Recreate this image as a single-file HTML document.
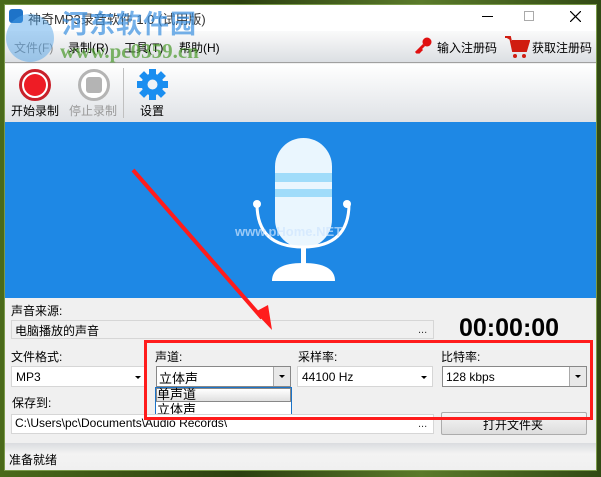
<!DOCTYPE html>
<html><head><meta charset="utf-8"><style>
*{margin:0;padding:0;box-sizing:border-box}
body{width:601px;height:477px;overflow:hidden;position:relative;background:linear-gradient(90deg,#4a6a1a,#2c4010 40%,#5a7a2a 70%,#324a14);font-family:"Liberation Sans","Noto Sans CJK SC",sans-serif;font-size:12px;color:#000}
.a{position:absolute}
.win{left:4px;top:4px;width:593px;height:467px;background:#f0f0f0;border:1px solid #7a9a4a}
.tb{border:1px solid #abadb3;background:#fff}
.cb{border:1px solid #acacac;background:#fff}
</style></head><body>
<div class="a win"></div>
<!-- title -->
<div class="a" style="left:5px;top:5px;width:591px;height:26px;background:#fff"></div>
<div class="a" style="left:9px;top:9px;width:14px;height:14px;background:#1e73c8;border-radius:3px"></div>
<div class="a" style="left:28px;top:9px;font-size:13px;color:#333">神奇MP3录音软件 1.0 (试用版)</div>
<div class="a" style="left:482px;top:16px;width:11px;height:1px;background:#000"></div>
<div class="a" style="left:524px;top:11px;width:10px;height:10px;border:1px solid #aaa"></div>
<svg class="a" style="left:570px;top:11px" width="11" height="11"><path d="M0 0L11 11M11 0L0 11" stroke="#000" stroke-width="1.2"/></svg>
<!-- menu -->
<div class="a" style="left:5px;top:31px;width:591px;height:32px;background:linear-gradient(#fafafa,#dcdfe3);border-bottom:1px solid #a0a0a0"></div>
<div class="a" style="left:14px;top:39px;font-size:12px;color:#888">文件(F)</div>
<div class="a" style="left:68px;top:39px">录制(R)</div>
<div class="a" style="left:124px;top:39px">工具(T)</div>
<div class="a" style="left:179px;top:39px">帮助(H)</div>
<svg class="a" style="left:413px;top:36px" width="20" height="20"><circle cx="14" cy="6" r="4.5" fill="#e01010"/><path d="M11 9L3 17M5 15l2 2M7 13l2 2" stroke="#e01010" stroke-width="3"/></svg>
<div class="a" style="left:437px;top:39px">输入注册码</div>
<svg class="a" style="left:504px;top:34px" width="26" height="26"><path d="M1 3h5l3 14h13l3-10H8" fill="#d01c10" stroke="#d01c10" stroke-width="2"/><circle cx="11" cy="22" r="2" fill="#d01c10"/><circle cx="20" cy="22" r="2" fill="#d01c10"/></svg>
<div class="a" style="left:532px;top:39px">获取注册码</div>
<!-- watermark -->
<div class="a" style="left:6px;top:14px;width:48px;height:48px;border-radius:50%;background:#4aa0e8;opacity:.45"></div>
<div class="a" style="left:62px;top:8px;font-size:26px;line-height:32px;font-weight:bold;color:#3a90e0;opacity:.7;letter-spacing:1px">河东软件园</div>
<div class="a" style="left:60px;top:40px;font-size:21px;line-height:22px;font-weight:bold;color:#4a9a2a;opacity:.7;font-family:'Liberation Serif',serif">www.pc0359.cn</div>
<!-- toolbar -->
<div class="a" style="left:5px;top:64px;width:591px;height:58px;background:linear-gradient(#fff,#dfe2e6)"></div>
<div class="a" style="left:19px;top:69px;width:32px;height:32px;border-radius:50%;border:3px solid #c8202a;background:#fff"></div>
<div class="a" style="left:24px;top:74px;width:22px;height:22px;border-radius:50%;background:#ee1c25"></div>
<div class="a" style="left:78px;top:69px;width:32px;height:32px;border-radius:50%;border:3px solid #b4b4b4;background:#fff"></div>
<div class="a" style="left:86px;top:77px;width:16px;height:16px;border-radius:3px;background:#b4b4b4"></div>
<div class="a" style="left:123px;top:68px;width:1px;height:50px;background:#c0c0c0"></div>
<svg class="a" style="left:136px;top:68px" width="33" height="33" viewBox="0 0 33 33"><g fill="#1a8ef0"><circle cx="16.5" cy="16.5" r="11"/><g id="t"><rect x="13" y="1" width="7" height="8"/><rect x="13" y="24" width="7" height="8"/></g><use href="#t" transform="rotate(45 16.5 16.5)"/><use href="#t" transform="rotate(90 16.5 16.5)"/><use href="#t" transform="rotate(135 16.5 16.5)"/></g><circle cx="16.5" cy="16.5" r="5" fill="#eef2f6"/></svg>
<div class="a" style="left:11px;top:102px;font-size:12px">开始录制</div>
<div class="a" style="left:69px;top:102px;font-size:12px;color:#999">停止录制</div>
<div class="a" style="left:140px;top:102px;font-size:12px">设置</div>
<!-- blue panel -->
<div class="a" style="left:5px;top:122px;width:591px;height:176px;background:#1e88e5"></div>
<svg class="a" style="left:250px;top:135px" width="110" height="150">
<rect x="25" y="3" width="57" height="110" rx="28.5" fill="#eaf6fe"/>
<rect x="25" y="38" width="57" height="9" fill="#a0dcfa"/>
<rect x="25" y="54" width="57" height="8" fill="#a0dcfa"/>
<path d="M7 69 Q7 112 53 112 Q99 112 99 69" fill="none" stroke="#fff" stroke-width="3"/>
<circle cx="7" cy="69" r="4" fill="#fff"/><circle cx="97" cy="69" r="4" fill="#fff"/>
<rect x="51" y="112" width="5" height="20" fill="#fff"/>
<path d="M22 146 Q22 128 53 128 Q85 128 85 146Z" fill="#fff"/>
</svg>
<div class="a" style="left:235px;top:224px;font-size:13px;font-weight:bold;color:#cfe6ff;opacity:.7">www.pHome.NET</div>
<!-- labels -->
<div class="a" style="left:11px;top:302px">声音来源:</div>
<div class="a tb" style="left:11px;top:320px;width:423px;height:19px;background:#f0f0f0;border-color:#d6d6d6"></div>
<div class="a" style="left:15px;top:322px">电脑播放的声音</div>
<div class="a" style="left:418px;top:324px;font-size:11px;color:#333">...</div>
<div class="a" style="left:459px;top:314px;font-size:25px;font-weight:bold">00:00:00</div>
<div class="a" style="left:11px;top:348px">文件格式:</div>
<div class="a cb" style="left:11px;top:366px;width:136px;height:21px;border-color:#d6d6d6"></div>
<div class="a" style="left:16px;top:370px">MP3</div>
<div class="a" style="left:135px;top:376px;width:0;height:0;border:3px solid transparent;border-top:3px solid #000"></div>
<div class="a" style="left:155px;top:348px">声道:</div>
<div class="a cb" style="left:156px;top:366px;width:135px;height:21px;border-color:#888"></div>
<div class="a" style="left:273px;top:367px;width:17px;height:19px;background:#e8e8e8;border-left:1px solid #aaa"></div>
<div class="a" style="left:279px;top:375px;width:0;height:0;border:3px solid transparent;border-top:3px solid #000"></div>
<div class="a" style="left:159px;top:368px;font-size:13px">立体声</div>
<div class="a" style="left:155px;top:387px;width:137px;height:31px;border:1px solid #1a73c8;background:#fff"></div>
<div class="a" style="left:156px;top:388px;width:135px;height:14px;background:linear-gradient(#fff,#e0e0e0);border:1px solid #888"></div>
<div class="a" style="left:157px;top:387px;font-size:13px;line-height:15px">单声道<br>立体声</div>
<div class="a" style="left:298px;top:348px">采样率:</div>
<div class="a cb" style="left:297px;top:366px;width:136px;height:21px;border-color:#d6d6d6"></div>
<div class="a" style="left:302px;top:370px">44100 Hz</div>
<div class="a" style="left:421px;top:376px;width:0;height:0;border:3px solid transparent;border-top:3px solid #000"></div>
<div class="a" style="left:441px;top:348px">比特率:</div>
<div class="a cb" style="left:442px;top:366px;width:145px;height:21px;border-color:#888"></div>
<div class="a" style="left:569px;top:367px;width:17px;height:19px;background:#e8e8e8;border-left:1px solid #aaa"></div>
<div class="a" style="left:575px;top:375px;width:0;height:0;border:3px solid transparent;border-top:3px solid #000"></div>
<div class="a" style="left:446px;top:370px">128 kbps</div>
<div class="a" style="left:12px;top:394px">保存到:</div>
<div class="a tb" style="left:11px;top:414px;width:423px;height:20px;border-color:#d6d6d6"></div>
<div class="a" style="left:15px;top:416px">C:\Users\pc\Documents\Audio Records\</div>
<div class="a" style="left:418px;top:418px;font-size:11px;color:#333">...</div>
<div class="a" style="left:441px;top:412px;width:146px;height:23px;border:1px solid #acacac;border-radius:2px;background:linear-gradient(#f6f6f6,#dddddd)"></div>
<div class="a" style="left:483px;top:416px">打开文件夹</div>
<!-- status -->
<div class="a" style="left:5px;top:443px;width:591px;height:27px;background:linear-gradient(#dadcdf,#f3f3f3 40%,#f0f0f0)"></div>
<div class="a" style="left:9px;top:451px">准备就绪</div>
<!-- annotations -->
<div class="a" style="left:144px;top:340px;width:449px;height:80px;border:3px solid #ff1c1c"></div>
<svg class="a" style="left:0;top:0" width="601" height="477"><path d="M133 170L262 318" stroke="#ff1c1c" stroke-width="4"/><path d="M255 312L272 330L268 305Z" fill="#ff1c1c"/></svg>
</body></html>
